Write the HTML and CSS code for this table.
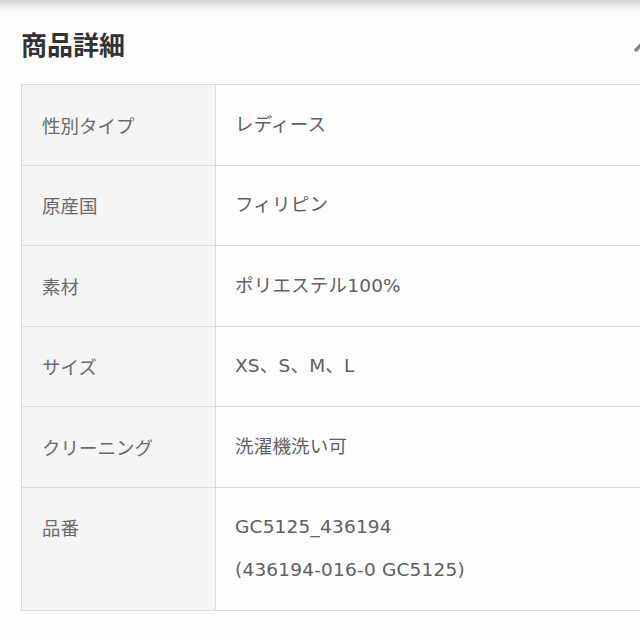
FILE: index.html
```html
<!DOCTYPE html>
<html lang="ja">
<head>
<meta charset="utf-8">
<title>商品詳細</title>
<link rel="stylesheet" href="styles.css">
</head>
<body>
<div class="topshade"></div>
<section class="details">
  <div class="details-head">
    <h2 class="details-title">商品詳細</h2>
    <svg class="chevron" width="30" height="20" viewBox="0 0 30 20"><path d="M3 16 L15 4 L27 16" fill="none" stroke="#858585" stroke-width="3.5" stroke-linecap="round" stroke-linejoin="round"/></svg>
  </div>
  <table class="spec">
    <tr><th>性別タイプ</th><td>レディース</td></tr>
    <tr><th>原産国</th><td>フィリピン</td></tr>
    <tr><th>素材</th><td>ポリエステル100%</td></tr>
    <tr><th>サイズ</th><td>XS、S、M、L</td></tr>
    <tr><th>クリーニング</th><td>洗濯機洗い可</td></tr>
    <tr><th>品番</th><td>GC5125_436194<br>(436194-016-0 GC5125)</td></tr>
  </table>
</section>
</body>
</html>
```
FILE: styles.css
```css
html, body {
  margin: 0;
  padding: 0;
  background: #fdfdfd;
  overflow: hidden;
  width: 640px;
  height: 640px;
}
body {
  font-family: "DejaVu Sans", "Noto Sans CJK JP", sans-serif;
  color: #666;
}
.topshade {
  height: 12px;
  background: linear-gradient(#d4d4d4, #fdfdfd);
}
.details {
  width: 720px;
  padding-left: 21px;
}
.details-head {
  display: flex;
  align-items: center;
  justify-content: space-between;
  width: 619px;
  margin-top: 15px;
  height: 34px;
}
.details-title {
  margin: 0;
  font-family: "Noto Sans CJK JP", sans-serif;
  font-size: 26px;
  line-height: 34px;
  font-weight: 700;
  color: #333;
}
.chevron {
  flex: none;
  margin-right: -23px;
}
.spec {
  margin-top: 23px;
  border-collapse: collapse;
  width: 700px;
  font-size: 18.5px;
  line-height: 42.5px;
}
.spec th, .spec td {
  border: 1px solid #dcdcdc;
  padding: 18.5px 19px;
  text-align: left;
  vertical-align: top;
  font-weight: 400;
}
.spec th {
  width: 154px;
  padding-left: 20px;
  background: #f5f5f5;
  color: #6a6a6a;
  font-family: "Noto Sans CJK JP", sans-serif;
}
.spec td {
  background: #fdfdfd;
  color: #606060;
  letter-spacing: 0.2px;
}
```
